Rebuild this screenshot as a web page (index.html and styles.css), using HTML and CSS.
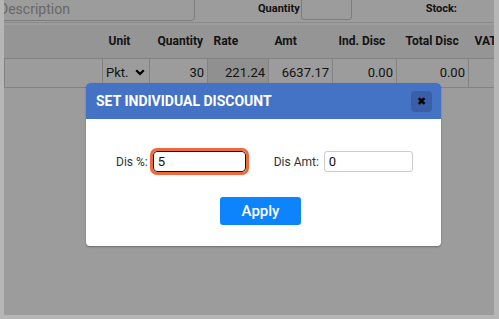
FILE: index.html
```html
<!DOCTYPE html>
<html lang="en">

<head>
    <meta charset="UTF-8">
    <title>Sales Entry</title>
    <link rel="stylesheet" href="styles.css">
</head>

<body>
    <div class="screen">
        <!-- item entry bar -->
        <div class="entry-bar">
            <input type="text" class="desc-input" placeholder="Description">
            <span class="bar-label qty-label">Quantity</span>
            <input type="text" class="qty-input">
            <span class="bar-label stock-label">Stock:</span>
        </div>

        <!-- items table -->
        <table class="items">
            <thead>
                <tr>
                    <th class="c-name"></th>
                    <th class="c-unit">Unit</th>
                    <th class="c-qty">Quantity</th>
                    <th class="c-rate">Rate</th>
                    <th class="c-amt">Amt</th>
                    <th class="c-ind">Ind. Disc</th>
                    <th class="c-total">Total Disc</th>
                    <th class="c-vat">VAT</th>
                </tr>
            </thead>
            <tbody>
                <tr>
                    <td class="c-name"></td>
                    <td class="c-unit">
                        <div class="unit-select">
                            <span>Pkt.</span>
                            <svg width="10" height="7" viewBox="0 0 10 7">
                                <path d="M1.2 1.2 L5 5 L8.8 1.2" fill="none" stroke="#000" stroke-width="2.2" />
                            </svg>
                        </div>
                    </td>
                    <td class="c-qty num">30</td>
                    <td class="c-rate num readonly">221.24</td>
                    <td class="c-amt num">6637.17</td>
                    <td class="c-ind num">0.00</td>
                    <td class="c-total num">0.00</td>
                    <td class="c-vat num"></td>
                </tr>
            </tbody>
        </table>

        <div class="overlay"></div>

        <!-- discount dialog -->
        <div class="modal">
            <div class="modal-header">
                <span class="modal-title">SET INDIVIDUAL DISCOUNT</span>
                <button class="close-btn">&#x2716;</button>
            </div>
            <div class="modal-body">
                <div class="fields">
                    <label class="field-label" for="disPercent">Dis %:</label>
                    <input type="text" id="disPercent" class="field-input focused" value="5">
                    <label class="field-label amt-label" for="disAmt">Dis Amt:</label>
                    <input type="text" id="disAmt" class="field-input" value="0">
                </div>
                <button class="apply-btn">Apply</button>
            </div>
        </div>
    </div>
</body>

</html>
```

FILE: styles.css
```css
body {
    margin: 0;
    background-color: #b6b6b6;
    font-family: Roboto, "Liberation Sans", Arial, sans-serif;
}

.screen {
    position: relative;
    width: 490px;
    height: 315px;
    margin-left: 4px;
    background-color: #fff;
    overflow: hidden;
}

.entry-bar {
    display: flex;
    align-items: center;
    height: 22px;
    border-bottom: 1px solid #e4e4e4;
}

.desc-input {
    flex: none;
    width: 205px;
    height: 26px;
    margin: -6px 0 0 -14px;
    padding: 2px 8px 0;
    box-sizing: border-box;
    border: 1px solid #ccc;
    border-radius: 4px;
    font-family: inherit;
    font-size: 14px;
}

.desc-input::placeholder {
    color: #aaa;
}

.bar-label {
    font-size: 11px;
    font-weight: bold;
    color: #222;
}

.qty-label {
    margin-left: 63px;
    margin-top: -6px;
}

.qty-input {
    width: 51px;
    height: 24px;
    margin: -6px 0 0 1px;
    box-sizing: border-box;
    border: 1px solid #ccc;
    border-radius: 3px;
}

.stock-label {
    margin-left: 74px;
    margin-top: -6px;
}

.items {
    border-collapse: collapse;
    table-layout: fixed;
    width: 540px;
    margin-top: 2px;
    background-color: #f4f4f4;
}

.items th,
.items td {
    box-sizing: border-box;
}

.items th {
    height: 33px;
    padding: 0 0 0 6px;
    text-align: left;
    font-size: 12px;
    font-weight: bold;
    color: #222;
    border-bottom: 1px solid #d4d4d4;
    white-space: nowrap;
}

.items td {
    height: 29px;
    padding: 0 3px;
    font-size: 13px;
    color: #222;
    background-color: #fff;
    border: 1px solid #d4d4d4;
}

.items td.num {
    text-align: right;
}

.items td.readonly {
    background-color: #ececec;
}

.c-name { width: 98px; }
.c-unit { width: 47px; }
.c-qty { width: 58px; }
.c-rate { width: 61px; }
.c-amt { width: 64px; }
.c-ind { width: 64px; }
.c-total { width: 72px; }
.c-vat { width: 76px; }

.items th.c-qty { padding-left: 8px; }
.items th.c-total { padding-left: 9px; }

.unit-select {
    display: flex;
    align-items: center;
    justify-content: space-between;
    padding-right: 1px;
}

.overlay {
    position: absolute;
    inset: 0;
    background-color: rgba(0, 0, 0, 0.39);
}

.modal {
    position: absolute;
    left: 82px;
    top: 83px;
    width: 355px;
    height: 163px;
    background-color: #fff;
    border-radius: 4px;
    overflow: hidden;
    box-shadow: 0 1px 2px rgba(0, 0, 0, 0.3);
}

.modal-header {
    display: flex;
    align-items: center;
    justify-content: space-between;
    height: 36px;
    padding: 0 9px 0 10px;
    background-color: #4472c4;
}

.modal-title {
    font-size: 14px;
    font-weight: bold;
    color: #fff;
}

.close-btn {
    width: 21px;
    height: 21px;
    padding: 0;
    border: none;
    border-radius: 4px;
    background-color: #3a5fa6;
    color: #000;
    font-size: 11px;
    line-height: 21px;
}

.modal-body {
    display: flex;
    flex-direction: column;
    align-items: center;
    padding-top: 32px;
}

.fields {
    display: flex;
    align-items: center;
    width: 100%;
    padding-left: 30px;
    box-sizing: border-box;
}

.field-label {
    font-size: 12px;
    color: #333;
}

.amt-label {
    margin-left: 28px;
}

.field-input {
    width: 89px;
    height: 21px;
    margin-left: 5px;
    padding: 0 4px;
    box-sizing: border-box;
    border: 1px solid #ccc;
    border-radius: 3px;
    font-family: inherit;
    font-size: 13px;
    color: #111;
}

.field-input.focused {
    width: 93px;
    border: 1px solid #111;
    border-radius: 4px;
    outline: 3px solid #f0693a;
    outline-offset: 0;
}

.apply-btn {
    width: 81px;
    height: 28px;
    margin-top: 25px;
    margin-left: -6px;
    border: none;
    border-radius: 3px;
    background-color: #0d84fb;
    color: #fff;
    font-family: inherit;
    font-size: 15px;
    font-weight: 500;
}
```
